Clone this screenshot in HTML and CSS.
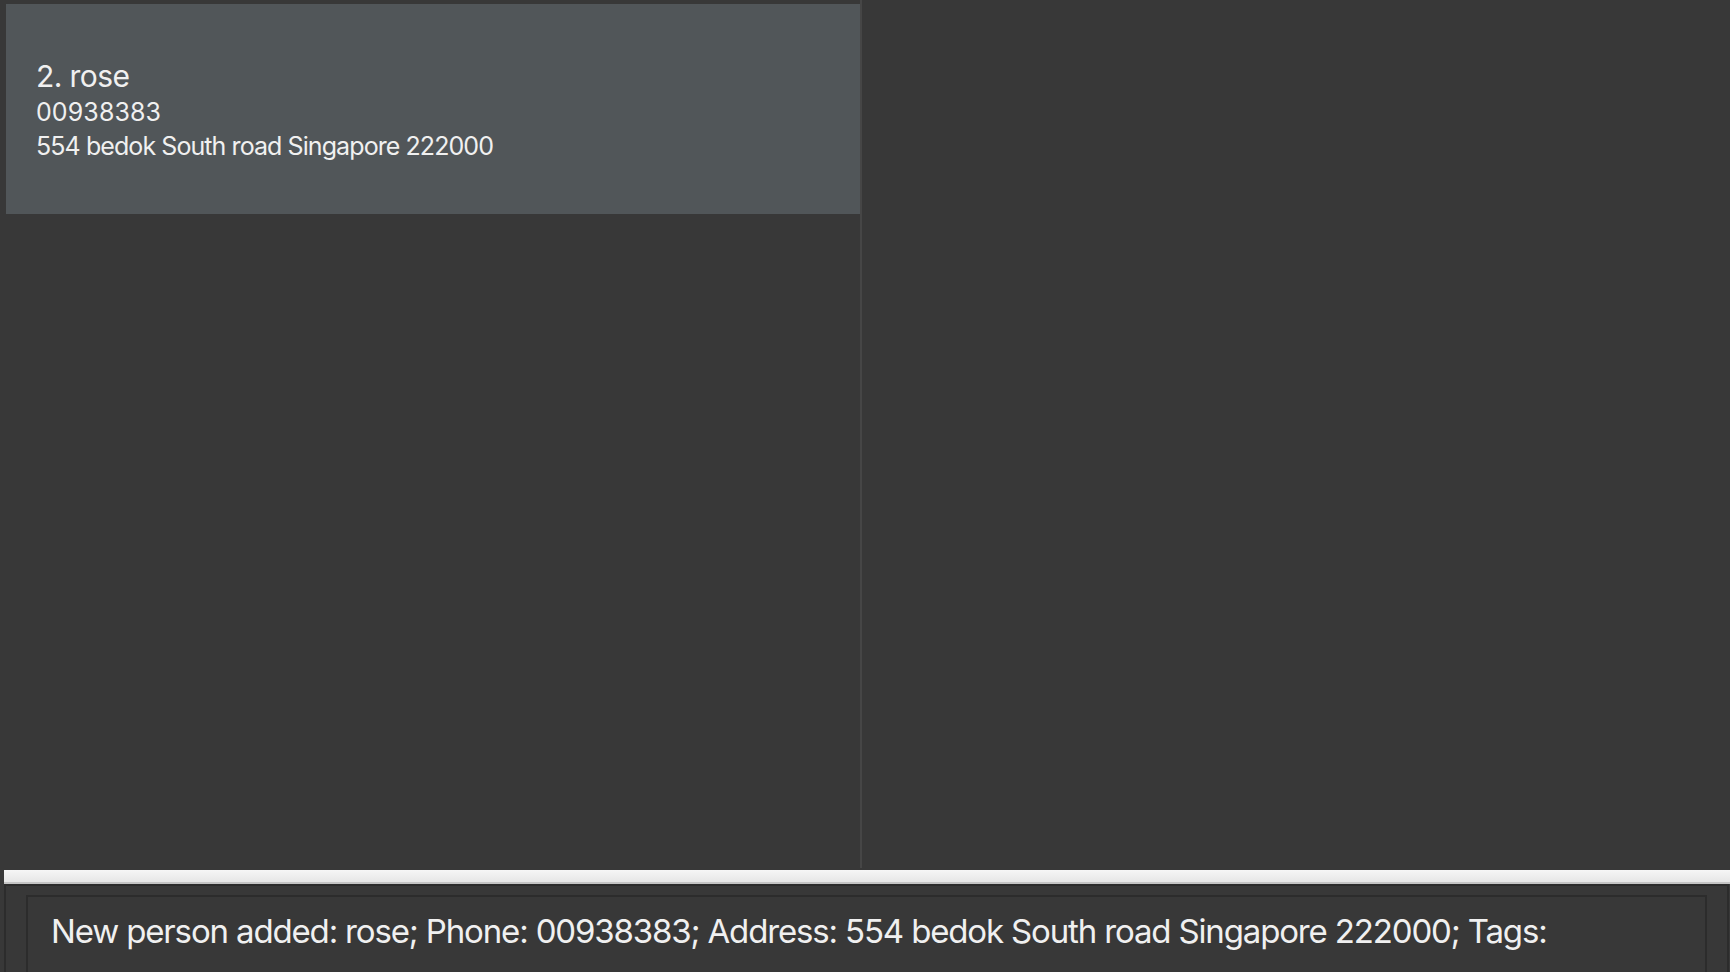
FILE: index.html
```html
<!DOCTYPE html>
<html>
<head>
<meta charset="utf-8">
<link rel="stylesheet" href="styles.css">
</head>
<body>
<div class="app">
  <div class="main">
    <div class="list-panel">
      <div class="card">
        <div class="name">2. rose</div>
        <div class="detail phone">00938383</div>
        <div class="detail address">554 bedok South road Singapore 222000</div>
      </div>
    </div>
    <div class="divider"></div>
    <div class="right-panel"></div>
  </div>
  <div class="splitter"></div>
  <div class="result">
    <div class="result-box">New person added: rose; Phone: 00938383; Address: 554 bedok South road Singapore 222000; Tags:</div>
  </div>
</div>
</body>
</html>
```
FILE: styles.css
```css
html, body {
  margin: 0;
  padding: 0;
  background: #383838;
  width: 1730px;
  height: 972px;
  overflow: hidden;
  font-family: Inter, "Liberation Sans", sans-serif;
  color: #f0f0f0;
}
.app {
  display: flex;
  flex-direction: column;
  height: 972px;
}
.main {
  display: flex;
  height: 868px;
  flex: none;
}
.list-panel {
  width: 860px;
  box-sizing: border-box;
  padding: 4px 0 0 6px;
  background: #383838;
}
.card {
  background: #515659;
  height: 210px;
  box-sizing: border-box;
  padding: 54px 0 0 30px;
  display: flex;
  flex-direction: column;
}
.name {
  font-size: 30px;
  line-height: 37px;
  letter-spacing: -0.6px;
}
.detail {
  font-size: 25px;
  line-height: 34px;
}
.phone {
  letter-spacing: 0.1px;
}
.address {
  letter-spacing: -0.92px;
}
.divider {
  width: 2px;
  background: #464646;
}
.right-panel {
  flex: 1;
  background: #383838;
}
.splitter {
  margin: 2px 0 0 4px;
  height: 12px;
  background: linear-gradient(#f6f6f6, #e6e6e6);
  border-bottom: 2px solid #c4c4c4;
  flex: none;
}
.result {
  flex: 1;
  margin-left: 4px;
  margin-right: 1px;
  border-left: 2px solid #2c2c2c;
  border-right: 2px solid #2c2c2c;
  border-top: 2px solid #2c2c2c;
  padding: 9px 20px 0 20px;
  box-sizing: border-box;
}
.result-box {
  border: 2px solid #2c2c2c;
  border-bottom: 0;
  height: 100%;
  box-sizing: border-box;
  padding: 14px 0 0 23px;
  font-size: 33px;
  line-height: 40px;
  white-space: nowrap;
  letter-spacing: -1.15px;
}
```
